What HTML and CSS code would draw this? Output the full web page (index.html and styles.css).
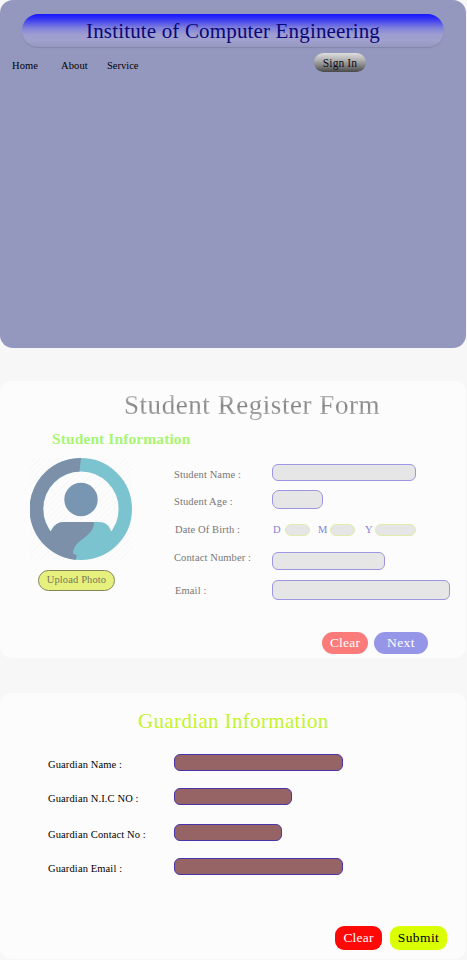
FILE: index.html
```html
<!DOCTYPE html>
<html lang="en">
<head>
<meta charset="utf-8">
<title>Institute of Computer Engineering</title>
<link rel="stylesheet" href="styles.css">
</head>
<body>
<header class="hero">
  <h1 class="banner">Institute of Computer Engineering</h1>
  <nav class="nav">
    <a class="home">Home</a><a class="about">About</a><a class="service">Service</a>
    <button class="signin">Sign In</button>
  </nav>
</header>

<section class="card student">
  <h2 class="form-title">Student Register Form</h2>
  <h3 class="sub-title">Student Information</h3>
  <div class="columns">
    <div class="photo">
      <svg class="avatar" viewBox="0 0 102 102">
        <circle cx="51" cy="51" r="44.3" fill="none" stroke="#7cc3d0" stroke-width="13.4"/>
        <path d="M51 0 A51 51 0 0 0 46 101.8 L48 88.4 A37.5 37.5 0 0 1 49.5 13.5 Z" fill="#7c90aa"/>
        <circle cx="51" cy="41.5" r="16.7" fill="#7895b2"/>
        <path d="M21 73 C24 67 28 64 34 64 H69 C75 64 79 67 81 73 L80 86 L51 99 L25 88 Z" fill="#7cc3d0"/>
        <path d="M21 73 C24 67 28 64 34 64 H64 C64 82 38 81 44 101.5 L22 90 Z" fill="#7c90aa"/>
      </svg>
      <button class="upload">Upload Photo</button>
    </div>
    <div class="fields">
      <div class="row r1"><label>Student Name :</label><input class="w144"></div>
      <div class="row r2"><label>Student Age :</label><input class="w51"></div>
      <div class="row r3"><label>Date Of Birth :</label>
        <div class="dob"><span>D</span><input class="day"><span class="m">M</span><input class="month"><span class="y">Y</span><input class="year"></div>
      </div>
      <div class="row r4"><label>Contact Number :</label><input class="w113"></div>
      <div class="row r5"><label>Email :</label><input class="w178"></div>
    </div>
  </div>
  <div class="actions"><button class="clear">Clear</button><button class="next">Next</button></div>
</section>

<section class="card guardian">
  <h2 class="guardian-title">Guardian Information</h2>
  <div class="guardian-fields">
    <div class="row g1"><label>Guardian Name :</label><input class="w169"></div>
    <div class="row g2"><label>Guardian N.I.C NO :</label><input class="w118"></div>
    <div class="row g3"><label>Guardian Contact No :</label><input class="w108"></div>
    <div class="row g4"><label>Guardian Email :</label><input class="w169"></div>
  </div>
  <div class="actions"><button class="clear">Clear</button><button class="submit">Submit</button></div>
</section>
</body>
</html>
```
FILE: styles.css
```css
* { box-sizing: border-box; margin: 0; padding: 0; }
body {
  width: 467px;
  height: 960px;
  overflow: hidden;
  background: #f7f7f7;
  font: 10.5px/12px "Liberation Serif", serif;
  letter-spacing: .12px;
  color: #000;
}
h1, h2, h3 { font-weight: 400; white-space: nowrap; }
button { font: inherit; letter-spacing: inherit; border: 0; white-space: nowrap; text-align: center; }
input { display: block; flex: none; font: inherit; outline: 0; }

.hero { width: 466px; height: 347.5px; border-radius: 13px; background: #9598be; padding-top: 14px; }
.banner {
  width: 422px;
  height: 33px;
  margin-left: 22px;
  border-radius: 17px;
  background: linear-gradient(#1616ff 0, #2d2df6 12%, #8080dc 42%, #9d9dd0 62%, #a0a1ce 80%, #9598be 100%);
  box-shadow: 0 1px 1px #8286aa;
  color: #090778;
  font-size: 21px;
  line-height: 34px;
  letter-spacing: .16px;
  text-align: center;
}
.nav { display: flex; padding: 6px 0 0 12px; }
.nav a { padding-top: 7px; }
.home { width: 49px; }
.about { width: 46px; }
.service { width: 207px; letter-spacing: 0; }
.signin {
  width: 52px;
  height: 19px;
  border-radius: 10px;
  background: linear-gradient(#dedede, #b0b0b0 38%, #858585 65%, #494949);
  color: #0c0c1c;
  font-size: 11.5px;
}

.card { width: 466px; border-radius: 12px; background: #fcfcfc; }
.student { height: 277px; margin-top: 33.5px; padding-top: 9px; color: #777; }
.form-title {
  margin-left: 124px;
  font-size: 27px;
  line-height: 30px;
  letter-spacing: .55px;
  background: linear-gradient(#bbb 15%, #858585 55%, #aaa 85%);
  -webkit-background-clip: text;
  background-clip: text;
  color: transparent;
}
.sub-title { margin: 10px 0 0 52px; font-size: 15.5px; font-weight: 700; line-height: 18px; letter-spacing: .1px; color: #a8f573; }
.columns { display: flex; height: 143px; margin-top: 10px; }
.photo { width: 174px; padding-left: 30px; }
.avatar {
  display: block;
  width: 102px;
  height: 102px;
  background: repeating-linear-gradient(135deg, #fcfcfc 0 3px, #f8f8f8 3px 4px);
}
.upload { width: 77px; height: 21px; margin: 10px 0 0 8px; padding-bottom: 2px; border: 1px solid #85855c; border-radius: 11px; background: #e5f17c; color: #77775b; }
.fields { padding-top: 6px; }
.row { display: flex; align-items: center; white-space: nowrap; }
.fields label { width: 98px; }
.fields input { border: 1px solid #9c95e2; border-radius: 6px; background: #e6e6e6; }
.fields .r1 { height: 17px; }
.r1 input { height: 17px; }
.r2 { height: 19px; margin-top: 9px; }
.r2 input { height: 19px; border-radius: 7px; }
.r3 { height: 12px; margin-top: 15px; }
.r4 { height: 18px; margin-top: 16px; }
.r4 input { height: 18px; }
.r5 { height: 20px; margin-top: 10px; }
.r5 input { height: 20px; }
.r1 label, .r2 label { padding-top: 5px; }
.r3 label, .r5 label { padding-left: 1px; }
.r5 label { padding-top: 2px; }
.r4 label { padding-bottom: 6px; }
.w144 { width: 144px; }
.w51 { width: 51px; }
.w113 { width: 113px; }
.w178 { width: 178px; }
.dob { display: flex; align-items: center; color: #8581d8; }
.dob span { width: 13px; padding-left: 1px; }
.dob .m { width: 20px; padding-left: 8px; }
.dob .y { width: 20px; padding-left: 10px; }
.dob .day, .dob .month, .dob .year { height: 12px; border-color: #e3edaa; border-radius: 6px; }
.day { width: 25px; }
.month { width: 25px; }
.year { width: 41px; }

.actions { display: flex; }
.actions button { font-size: 13.5px; letter-spacing: .2px; }
.student .actions { margin: 31px 0 0 322px; gap: 6px; }
.student .actions button { height: 22px; border-radius: 11px; color: #fff; }
.student .clear { width: 46px; background: #fb7b7b; }
.student .next { width: 54px; background: #9696e9; letter-spacing: .4px; }

.guardian { height: 266px; margin-top: 35px; padding-top: 17px; }
.guardian-title { margin-left: 138px; font-size: 21px; line-height: 22px; letter-spacing: .35px; color: #c4f32b; }
.guardian-fields { padding: 22px 0 0 48px; }
.guardian label { width: 126px; padding-top: 5px; }
.guardian input { height: 17px; border: 1px solid #4934ac; border-radius: 6px; background: #966464; }
.guardian .row { height: 17px; }
.guardian .g2 { margin-top: 17px; }
.guardian .g3 { margin-top: 19px; }
.guardian .g4 { margin-top: 17px; }
.w169 { width: 169px; }
.w118 { width: 118px; }
.w108 { width: 108px; }
.guardian .actions { margin: 51px 0 0 335px; gap: 8px; }
.guardian .actions button { height: 24px; border-radius: 9px; }
.guardian .clear { width: 47px; background: #fe0808; color: #fff; }
.guardian .submit { width: 57px; background: #d9ff00; letter-spacing: .4px; }
```
